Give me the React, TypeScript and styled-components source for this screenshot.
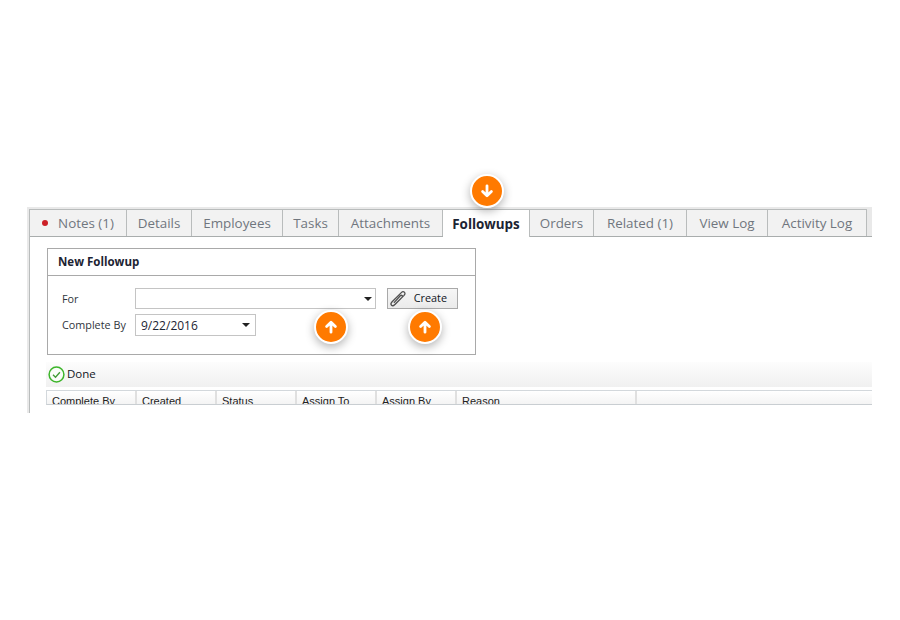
import React from "react";
import styled, { createGlobalStyle } from "styled-components";

const Global = createGlobalStyle`
  html, body { margin: 0; padding: 0; background: #fff; }
  body { font-family: "Open Sans", "Noto Sans", sans-serif; }
`;

const Page = styled.div`
  position: relative;
  width: 900px;
  height: 620px;
  padding: 207px 0 0 27px;
  box-sizing: border-box;
  overflow: hidden;
`;

const Frame = styled.div`
  width: 845px;
  height: 206px;
  box-sizing: border-box;
  border-top: 2px solid #e9e9e9;
  border-left: 2px solid #e9e9e9;
  overflow: hidden;
`;

const Inner = styled.div`
  height: 100%;
  box-sizing: border-box;
  border-left: 1px solid #b9bcbc;
`;

const TabBar = styled.div`
  display: flex;
  height: 28px;
  box-sizing: border-box;
  background: #e9e9e9;
  border-bottom: 1px solid #a9adad;
`;

const Tab = styled.div<{ $w: number; $active?: boolean }>`
  width: ${(p) => p.$w}px;
  flex: none;
  height: ${(p) => (p.$active ? 28 : 27)}px;
  box-sizing: border-box;
  display: flex;
  align-items: center;
  justify-content: center;
  gap: 10px;
  border-top: 1px solid #b9bcbc;
  border-right: 1px solid #b9bcbc;
  background: ${(p) => (p.$active ? "#fff" : "#f2f2f2")};
  color: ${(p) => (p.$active ? "#1c2433" : "#70767e")};
  font-size: 13.4px;
  font-weight: ${(p) => (p.$active ? 700 : 400)};
  white-space: nowrap;
  z-index: 1;
`;

const Dot = styled.span`
  width: 6px;
  height: 6px;
  border-radius: 50%;
  background: #cc2027;
`;

const Content = styled.div`
  padding: 11px 0 0 17px;
`;

const Panel = styled.section`
  width: 429px;
  height: 107px;
  box-sizing: border-box;
  border: 1px solid #a9a9a9;
`;

const PanelTitle = styled.h2`
  margin: 0;
  height: 27px;
  box-sizing: border-box;
  border-bottom: 1px solid #a9a9a9;
  padding: 0 0 2px 10px;
  display: flex;
  align-items: center;
  font-size: 11.5px;
  font-weight: 700;
  color: #1c2433;
`;

const Form = styled.div`
  display: grid;
  grid-template-columns: 73px auto 1fr;
  grid-template-rows: 21px 22px;
  row-gap: 5px;
  padding: 12px 0 0 14px;
  align-items: center;
`;

const Label = styled.label<{ $raise?: boolean }>`
  font-size: 10.8px;
  color: #30353c;
  padding-bottom: ${(p) => (p.$raise ? 2 : 0)}px;
`;

const Field = styled.div<{ $w: number }>`
  width: ${(p) => p.$w}px;
  height: 100%;
  box-sizing: border-box;
  border: 1px solid #c4c4c4;
  display: flex;
  align-items: center;
  padding: 0 3px 0 5px;
  font-size: 12px;
  color: #1c2433;
  background: #fff;
`;

const Caret = styled.span<{ $inset?: number }>`
  width: 0;
  height: 0;
  margin-left: auto;
  margin-right: ${(p) => p.$inset ?? 0}px;
  border-left: 4px solid transparent;
  border-right: 4px solid transparent;
  border-top: 4px solid #222;
`;

const CreateButton = styled.button`
  margin-left: 11px;
  width: 71px;
  height: 21px;
  box-sizing: border-box;
  padding: 0 10px 0 1px;
  border: 1px solid #a9a9a9;
  background: linear-gradient(#f6f6f6, #ebebeb);
  display: flex;
  align-items: center;
  justify-content: space-between;
  font: 400 10.8px/14px "Open Sans", sans-serif;
  color: #10151c;
`;

const ButtonLabel = styled.span`
  position: relative;
  top: -1px;
`;

const DoneBar = styled.div`
  margin: 7px 0 0 -1px;
  height: 25px;
  padding-left: 2px;
  display: flex;
  align-items: center;
  gap: 2px;
  background: linear-gradient(#fdfdfd, #f0f0f0);
  font-size: 11.5px;
  color: #10151c;
`;

const DoneLabel = styled.span`
  position: relative;
  top: -1px;
`;

const GridHeader = styled.div`
  margin: 3px 0 0 -1px;
  height: 15px;
  box-sizing: border-box;
  display: flex;
  overflow: hidden;
  border: 1px solid #d3d8dc;
  border-right: 0;
  border-bottom-color: #c9ced2;
  background: linear-gradient(#fff, #f4f4f4);
`;

const HeadCell = styled.div<{ $w?: number }>`
  ${(p) => (p.$w ? `width: ${p.$w}px; flex: none;` : "flex: 1;")}
  box-sizing: border-box;
  padding: 4px 0 0 5px;
  font: 400 11px/13px "Liberation Sans", sans-serif;
  color: #222;
  white-space: nowrap;
  & + & {
    border-left: 2px solid #e0e0e0;
  }
`;

const Badge = styled.div<{ $x: number; $y: number }>`
  position: absolute;
  left: ${(p) => p.$x - 17}px;
  top: ${(p) => p.$y - 17}px;
  width: 34px;
  height: 34px;
  box-sizing: border-box;
  border-radius: 50%;
  border: 2px solid #fff;
  background: #ff7a00;
  box-shadow: 0 3px 10px rgba(0, 0, 0, 0.3);
  display: flex;
  align-items: center;
  justify-content: center;
  z-index: 3;
`;

const Arrow = ({ up }: { up?: boolean }) => (
  <svg width="14" height="14" viewBox="0 0 14 14" fill="none" stroke="#fff" strokeWidth="2.8" strokeLinecap="round" strokeLinejoin="round">
    {up ? <path d="M7 12.2V2.4M2.6 6.6 7 2.2l4.4 4.4" /> : <path d="M7 1.8V11.6M2.6 7.4 7 11.8l4.4-4.4" />}
  </svg>
);

const Clip = () => (
  <svg width="18" height="18" viewBox="0 0 18 18" fill="none" stroke="#505050" strokeWidth="1.3" strokeLinecap="round" strokeLinejoin="round">
    <path d="M6.2 14.2 14.8 5.6c1.5-1.6 1.4-2.7 .6-3.4-.9-.8-2-.7-3.1 .4L2.9 12c-1.2 1.3-1.2 2.4-.4 3.2s2 .7 3.1-.4l7.3-7.4c.7-.8 .7-1.5 .2-1.9s-1.1-.4-1.8 .3L5.3 12.4" />
  </svg>
);

const Check = () => (
  <svg width="17" height="17" viewBox="0 0 17 17" fill="none">
    <circle cx="8.5" cy="8.5" r="7.4" stroke="#3db52a" strokeWidth="1.5" fill="#fafdf9" />
    <path d="M5 8.7 7.5 11.2l4.4-5" stroke="#3f9a34" strokeWidth="1.3" />
  </svg>
);

const tabs = [
  { label: "Details", w: 65 },
  { label: "Employees", w: 91 },
  { label: "Tasks", w: 56 },
  { label: "Attachments", w: 104 },
  { label: "Followups", w: 87, active: true },
  { label: "Orders", w: 64 },
  { label: "Related (1)", w: 93 },
  { label: "View Log", w: 81 },
  { label: "Activity Log", w: 99 },
];

const columns = [
  { label: "Complete By", w: 88 },
  { label: "Created", w: 80 },
  { label: "Status", w: 80 },
  { label: "Assign To", w: 80 },
  { label: "Assign By", w: 80 },
  { label: "Reason", w: 180 },
  { label: "" },
];

export default function App() {
  return (
    <Page>
      <Global />
      <Frame>
        <Inner>
          <TabBar>
            <Tab $w={97}>
              <Dot />
              Notes (1)
            </Tab>
            {tabs.map((t) => (
              <Tab key={t.label} $w={t.w} $active={t.active}>
                {t.label}
              </Tab>
            ))}
          </TabBar>
          <Content>
            <Panel>
              <PanelTitle>New Followup</PanelTitle>
              <Form>
                <Label>For</Label>
                <Field $w={241}>
                  <Caret />
                </Field>
                <CreateButton>
                  <Clip />
                  <ButtonLabel>Create</ButtonLabel>
                </CreateButton>
                <Label $raise>Complete By</Label>
                <Field $w={121}>
                  9/22/2016
                  <Caret $inset={2} />
                </Field>
              </Form>
            </Panel>
            <DoneBar>
              <Check />
              <DoneLabel>Done</DoneLabel>
            </DoneBar>
            <GridHeader>
              {columns.map((c) => (
                <HeadCell key={c.label} $w={c.w}>
                  {c.label}
                </HeadCell>
              ))}
            </GridHeader>
          </Content>
        </Inner>
      </Frame>
      <Badge $x={487} $y={191}>
        <Arrow />
      </Badge>
      <Badge $x={331} $y={327}>
        <Arrow up />
      </Badge>
      <Badge $x={425} $y={327}>
        <Arrow up />
      </Badge>
    </Page>
  );
}
